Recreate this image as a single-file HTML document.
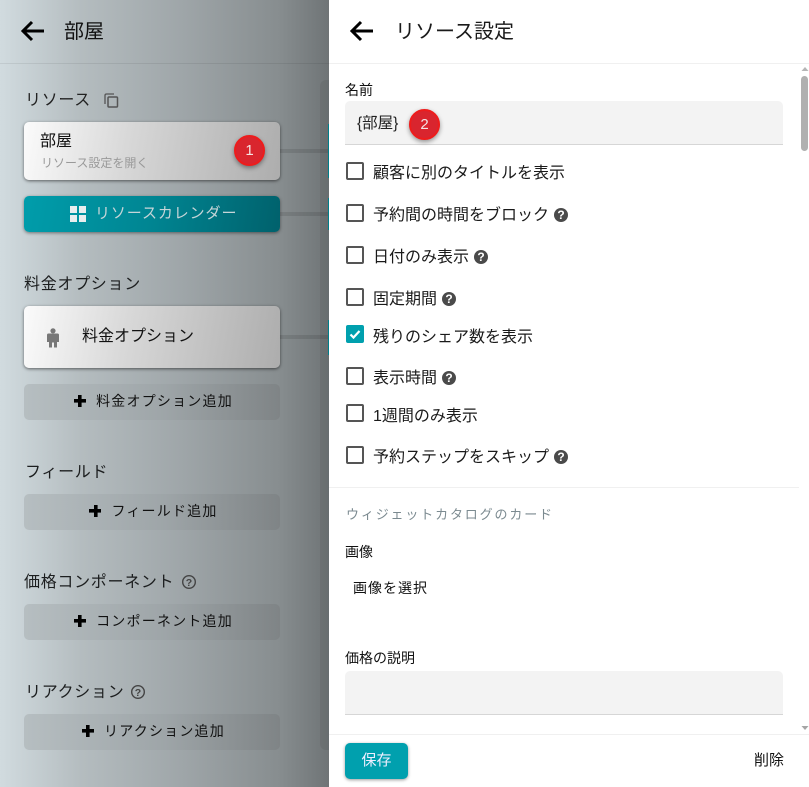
<!DOCTYPE html>
<html lang="ja"><head><meta charset="utf-8"><style>
html,body{margin:0;padding:0;width:809px;height:787px;overflow:hidden;background:#fff}
body{font-family:"Liberation Sans","Noto Sans CJK JP",sans-serif;color:#111;position:relative}
.a{position:absolute;white-space:nowrap}
#left{position:absolute;left:0;top:0;width:329px;height:787px;overflow:hidden;background:linear-gradient(90deg,#d1dbdf 0%,#b4bcbf 25%,#9fa6a9 55%,#878d8f 85%,#6f7476 100%)}
.strip{position:absolute;left:320px;top:80px;width:9px;height:670px;background:rgba(0,0,0,.06);border-radius:6px 0 0 6px}
.card{position:absolute;left:24px;width:256px;border-radius:5px;background:linear-gradient(100deg,#fbfbfb 0%,#d8d8d8 40%,#adadad 100%);box-shadow:0 1px 3px rgba(0,0,0,.55)}
.add{position:absolute;left:24px;width:253px;padding-left:3px;height:36px;border-radius:5px;background:linear-gradient(90deg,#b6bec1 0%,#9ea5a8 55%,#7f8486 100%);font-size:14px;letter-spacing:1.200px;line-height:35px;text-align:center;color:#111}
.add b{font-size:0;display:inline-block;width:12px;height:12px;margin-right:10px;vertical-align:-1px;background:linear-gradient(#000,#000) 50% 50%/12px 3.600px no-repeat,linear-gradient(#000,#000) 50% 50%/3.600px 12px no-repeat}
.conn{position:absolute;left:280px;width:48px;height:4px;background:rgba(0,0,0,.1)}
.teal{position:absolute;left:328px;width:1px;background:#007f8a}
.h{font-size:16px;letter-spacing:.7px;line-height:20px;color:#1c1e1f}
.badge{position:absolute;width:27px;height:27px;border-radius:50%;background:#d9252e;border:2px solid #ee1c1c;color:#f4e4e4;font-size:15px;line-height:27px;text-align:center;box-shadow:0 2px 5px rgba(0,0,0,.4)}
.cb{position:absolute;left:346px;width:14px;height:14px;border:2px solid #555;border-radius:2px}
.lb{font-size:16px;line-height:20px;color:#1a1a1a;left:373px}
.q{display:inline-block;vertical-align:1px;margin-left:5px;width:14px;height:14px;border-radius:50%;background:#4a4a4a;color:#fff;font:bold 12px/14px "Liberation Sans",sans-serif;text-align:center;letter-spacing:0}
.small{font-size:14px;line-height:18px;color:#111}
.inp{position:absolute;left:345px;width:438px;background:#f3f3f3;border-bottom:1px solid #d6d6d6;border-radius:5px 5px 0 0}
.hr{position:absolute;height:1px;background:#f0f0f0}
</style></head><body>

<div id="left">
  <div class="strip"></div>
  <div class="hr" style="left:0;top:63px;width:329px;background:rgba(0,0,0,.07)"></div>
  <svg class="a" style="left:20px;top:20px" width="24" height="22" viewBox="0 0 24 22"><path d="M24 11H3.500M12 2L3 11l9 9" fill="none" stroke="#000" stroke-width="3"/></svg>
  <div class="a" style="left:64px;top:18px;font-size:20px;line-height:28px;color:#111">部屋</div>

  <div class="a h" style="left:25px;top:91px;color:#222">リソース</div>
  <svg class="a" style="left:103px;top:92px" width="16" height="17" viewBox="0 0 16 17"><path d="M2 12V3.500Q2 2 3.500 2H11" fill="none" stroke="#555" stroke-width="1.300"/><rect x="5" y="5" width="9.500" height="10" rx="1" fill="none" stroke="#555" stroke-width="1.500"/></svg>

  <div class="conn" style="top:149px"></div><div class="teal" style="top:124px;height:54px"></div>
  <div class="card" style="top:122px;height:58px"></div>
  <div class="a" style="left:40px;top:131px;font-size:16px;line-height:22px;color:#111">部屋</div>
  <div class="a" style="left:41px;top:155px;font-size:12px;line-height:16px;color:#999">リソース設定を開く</div>
  <div class="badge" style="left:234px;top:135px">1</div>

  <div class="conn" style="top:212px"></div><div class="teal" style="top:198px;height:32px"></div>
  <div class="card" style="top:196px;height:36px;background:linear-gradient(100deg,#009dab 0%,#008592 50%,#00616c 100%);box-shadow:0 1px 3px rgba(0,0,0,.45)"></div>
  <svg class="a" style="left:70px;top:206px" width="17" height="16"><g fill="#e8eeef"><rect width="7" height="7"/><rect x="9" width="7" height="7"/><rect y="9" width="7" height="7"/><rect x="9" y="9" width="7" height="7"/></g></svg>
  <div class="a" style="left:95px;top:204px;font-size:15px;line-height:20px;letter-spacing:.9px;color:#c6d5d8">リソースカレンダー</div>

  <div class="a h" style="left:24px;top:275px">料金オプション</div>
  <div class="conn" style="top:335px"></div><div class="teal" style="top:320px;height:35px"></div>
  <div class="card" style="top:306px;height:62px"></div>
  <svg class="a" style="left:46px;top:328px" width="14" height="20" viewBox="0 0 14 20"><circle cx="7" cy="2.800" r="2.600" fill="#777"/><path d="M1 7Q1 5.500 2.500 5.500H11.500Q13 5.500 13 7V14H11V19.500H8V14.500H6V19.500H3V14H1Z" fill="#777"/></svg>
  <div class="a" style="left:82px;top:327px;font-size:16px;line-height:20px;color:#111">料金オプション</div>
  <div class="add" style="top:384px"><b></b>料金オプション追加</div>

  <div class="a h" style="left:25px;top:463px">フィールド</div>
  <div class="add" style="top:494px"><b></b>フィールド追加</div>

  <div class="a h" style="left:24px;top:573px">価格コンポーネント</div>
  <svg class="a" style="left:181px;top:574px" width="16" height="16" viewBox="0 0 16 16"><circle cx="8" cy="8" r="6.300" fill="none" stroke="#444" stroke-width="1.400"/><text x="8" y="11.800" font-size="10.500" font-weight="bold" text-anchor="middle" fill="#444" font-family="Liberation Sans">?</text></svg>
  <div class="add" style="top:604px"><b></b>コンポーネント追加</div>

  <div class="a h" style="left:25px;top:683px">リアクション</div>
  <svg class="a" style="left:130px;top:684px" width="16" height="16" viewBox="0 0 16 16"><circle cx="8" cy="8" r="6.300" fill="none" stroke="#444" stroke-width="1.400"/><text x="8" y="11.800" font-size="10.500" font-weight="bold" text-anchor="middle" fill="#444" font-family="Liberation Sans">?</text></svg>
  <div class="add" style="top:714px"><b></b>リアクション追加</div>
</div>

<div class="hr" style="left:329px;top:63px;width:480px"></div>
<svg class="a" style="left:349px;top:20px" width="24" height="22" viewBox="0 0 24 22"><path d="M24 11H3.500M12 2L3 11l9 9" fill="none" stroke="#000" stroke-width="3"/></svg>
<div class="a" style="left:395px;top:18px;font-size:20px;line-height:28px;color:#1a1a1a">リソース設定</div>

<div class="a small" style="left:345px;top:81px">名前</div>
<div class="inp" style="top:101px;height:43px"></div>
<div class="a" style="left:357px;top:114px;font-size:15.500px;line-height:20px;color:#222">{部屋}</div>
<div class="badge" style="left:409px;top:109px">2</div>

<div class="cb" style="top:162px"></div><div class="a lb" style="top:164px">顧客に別のタイトルを表示</div>
<div class="cb" style="top:204px"></div><div class="a lb" style="top:206px">予約間の時間をブロック<span class="q">?</span></div>
<div class="cb" style="top:246px"></div><div class="a lb" style="top:248px">日付のみ表示<span class="q">?</span></div>
<div class="cb" style="top:288px"></div><div class="a lb" style="top:290px">固定期間<span class="q">?</span></div>
<div class="cb" style="top:325px;background:#00a0ae;border-color:#00a0ae"></div>
<svg class="a" style="left:349px;top:329px" width="12" height="11"><path d="M1.500 5.500l3 3 6-6.500" fill="none" stroke="#fff" stroke-width="2.200"/></svg>
<div class="a lb" style="top:328px">残りのシェア数を表示</div>
<div class="cb" style="top:367px"></div><div class="a lb" style="top:369px">表示時間<span class="q">?</span></div>
<div class="cb" style="top:404px"></div><div class="a lb" style="top:407px">1週間のみ表示</div>
<div class="cb" style="top:446px"></div><div class="a lb" style="top:448px">予約ステップをスキップ<span class="q">?</span></div>

<div class="hr" style="left:329px;top:487px;width:470px"></div>
<div class="a" style="left:346px;top:506px;font-size:13px;line-height:18px;letter-spacing:1.850px;color:#7b8a90">ウィジェットカタログのカード</div>
<div class="a small" style="left:345px;top:543px">画像</div>
<div class="a" style="left:353px;top:579px;font-size:14px;line-height:18px;letter-spacing:1px;color:#111">画像を選択</div>
<div class="a small" style="left:345px;top:649px">価格の説明</div>
<div class="inp" style="top:671px;height:43px"></div>

<div class="a" style="left:801px;top:76px;width:7px;height:75px;background:#b0b0b0;border-radius:3.500px"></div>
<svg class="a" style="left:801px;top:66px" width="8" height="6"><path d="M4 1L7.500 5H.5Z" fill="#b5b5b5"/></svg>
<svg class="a" style="left:801px;top:725px" width="8" height="6"><path d="M4 5L7.500 1H.5Z" fill="#a5a5a5"/></svg>

<div class="hr" style="left:329px;top:734px;width:480px"></div>
<div class="a" style="left:345px;top:743px;width:63px;height:36px;border-radius:5px;background:#00a0ae;box-shadow:0 1px 3px rgba(0,0,0,.4);color:#eef;font-size:15px;line-height:35px;text-align:center">保存</div>
<div class="a" style="left:754px;top:751px;font-size:15px;line-height:20px;color:#111">削除</div>
</body></html>
